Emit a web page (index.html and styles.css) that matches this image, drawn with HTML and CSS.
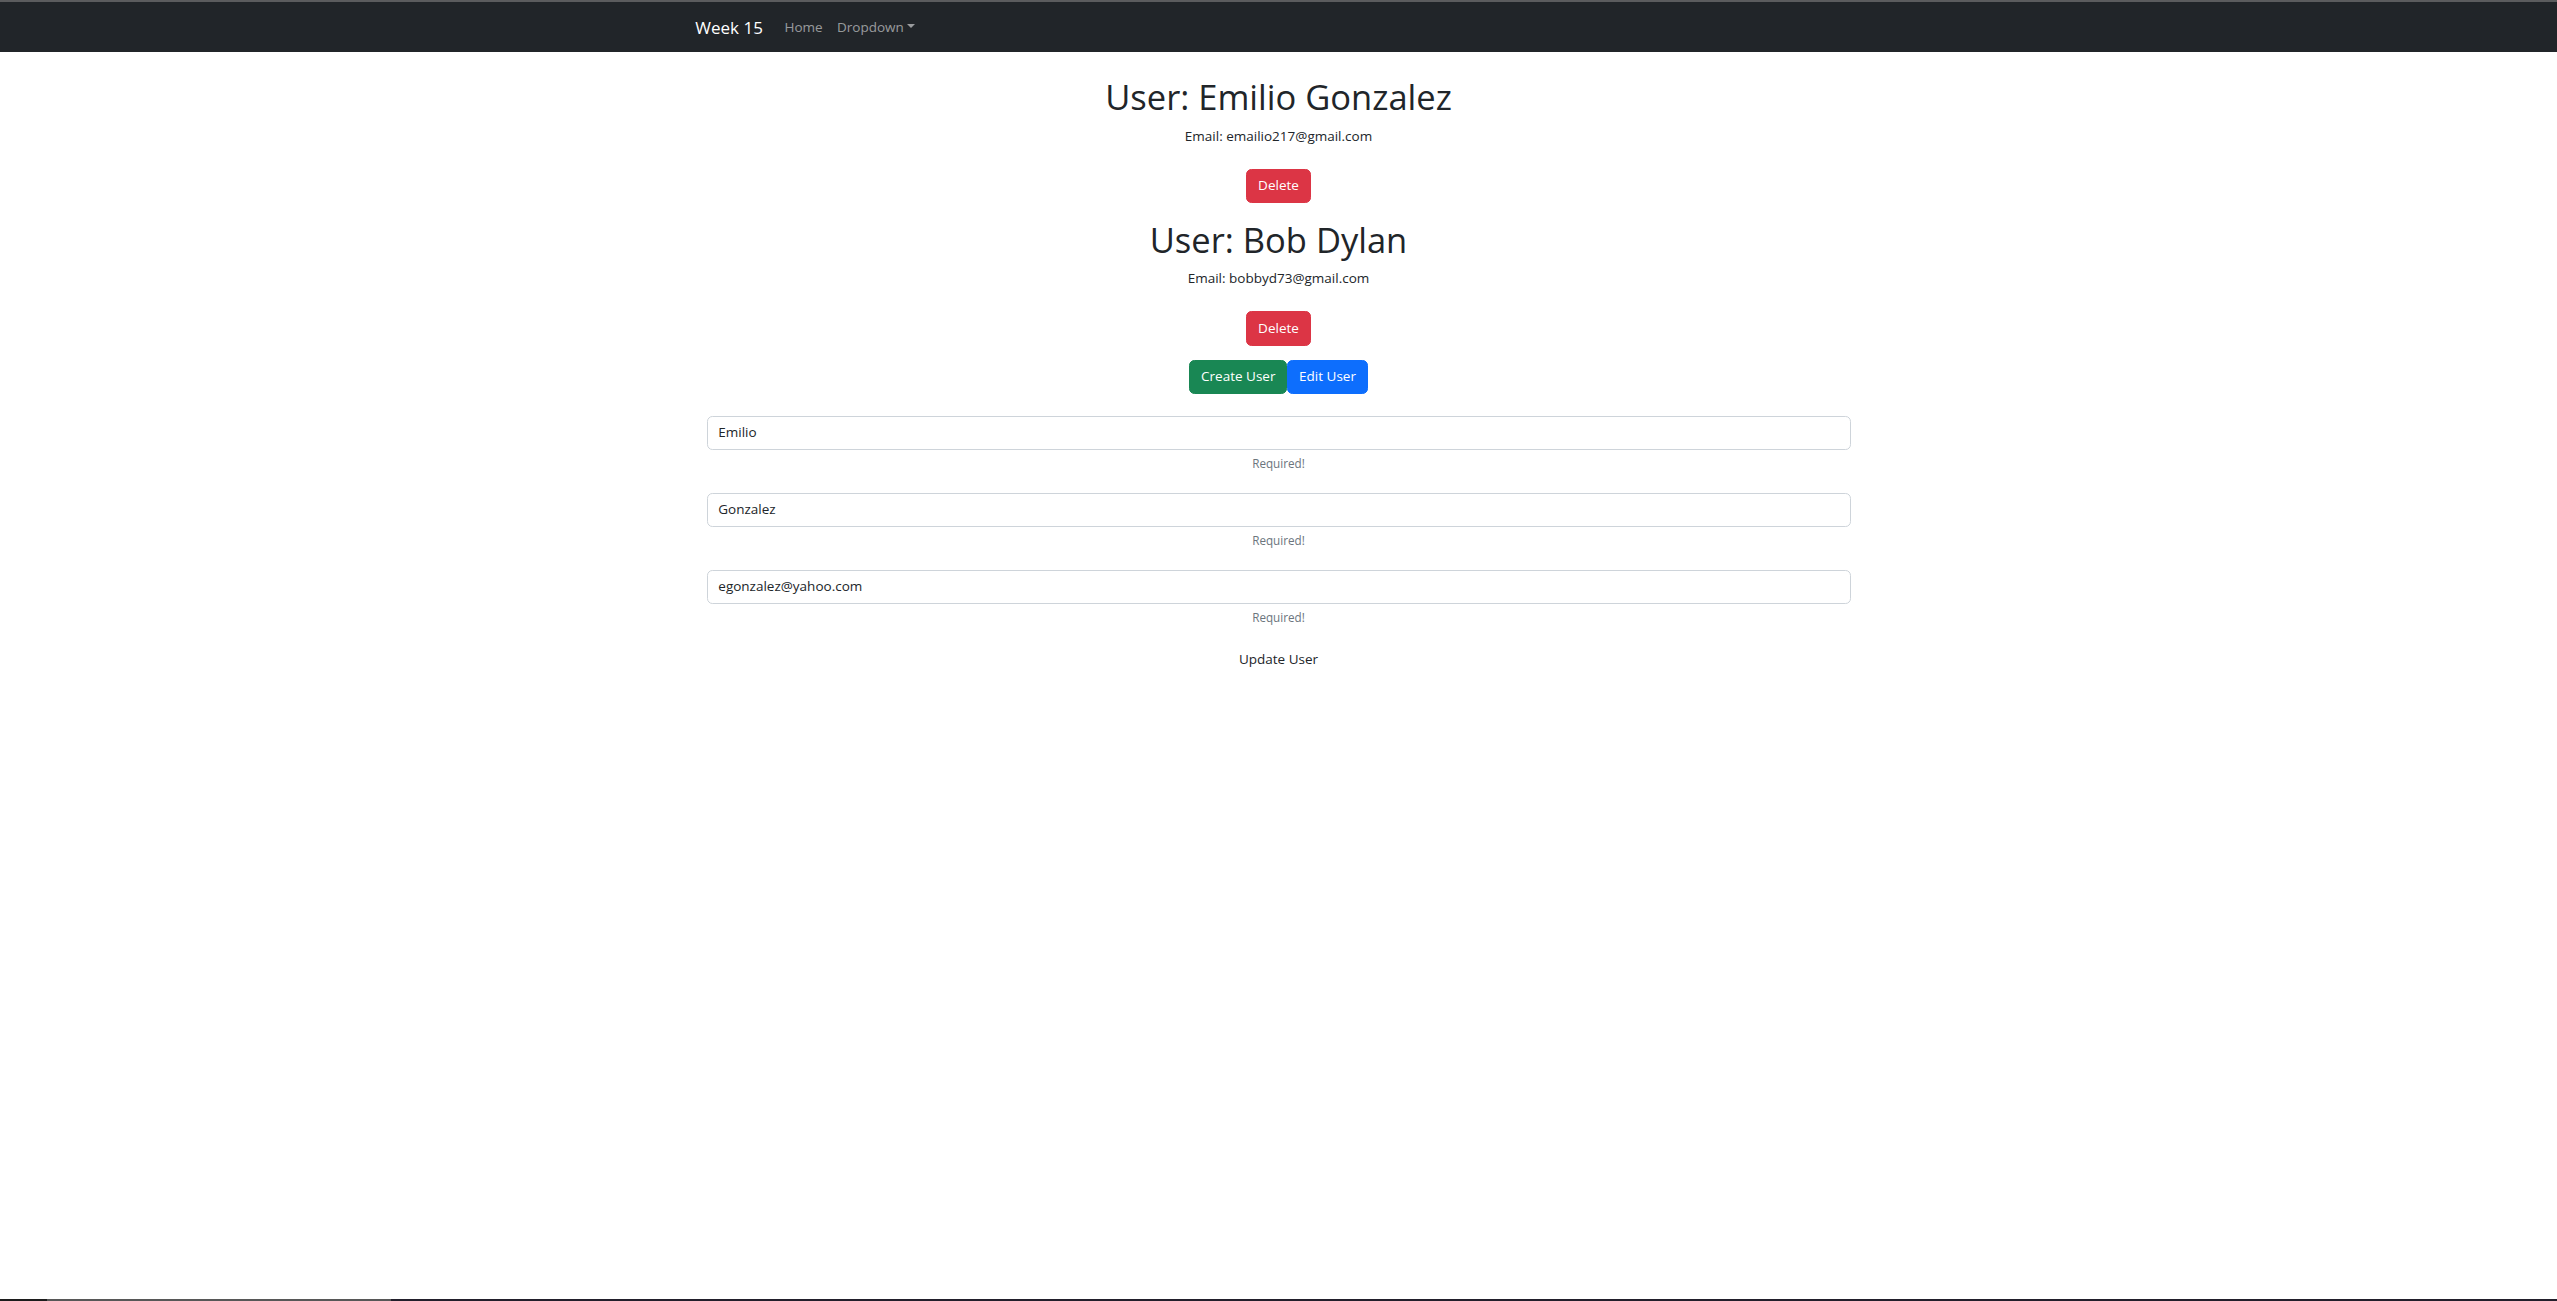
FILE: index.html
```html
<!DOCTYPE html>
<html lang="en">
<head>
<meta charset="utf-8">
<title>Week 15</title>
<link rel="stylesheet" href="styles.css">
</head>
<body>
<div class="chrome-top"></div>
<nav class="navbar">
  <div class="nav-inner">
    <a class="brand" href="#">Week 15</a>
    <ul class="nav-links">
      <li><a class="nav-link" href="#">Home</a></li>
      <li><a class="nav-link" href="#">Dropdown<span class="caret"></span></a></li>
    </ul>
  </div>
</nav>
<main class="page">
  <section class="user">
    <h1 class="user-name">User: Emilio Gonzalez</h1>
    <p class="user-email">Email: emailio217@gmail.com</p>
    <div class="actions"><button class="btn btn-danger" type="button">Delete</button></div>
  </section>
  <section class="user">
    <h1 class="user-name">User: Bob Dylan</h1>
    <p class="user-email">Email: bobbyd73@gmail.com</p>
    <div class="actions"><button class="btn btn-danger" type="button">Delete</button></div>
  </section>
  <div class="toggle">
    <button class="btn btn-success" type="button">Create User</button><button class="btn btn-primary" type="button">Edit User</button>
  </div>
  <form class="user-form">
    <div class="fields">
      <div class="field">
        <input class="form-control" type="text" value="Emilio">
        <small class="form-text">Required!</small>
      </div>
      <div class="field">
        <input class="form-control" type="text" value="Gonzalez">
        <small class="form-text">Required!</small>
      </div>
      <div class="field">
        <input class="form-control" type="text" value="egonzalez@yahoo.com">
        <small class="form-text">Required!</small>
      </div>
    </div>
    <button class="btn btn-plain" type="button">Update User</button>
  </form>
</main>
<div class="taskbar"><span class="tb-a"></span><span class="tb-b"></span><span class="tb-c"></span></div>
</body>
</html>
```

FILE: styles.css
```css
* { box-sizing: border-box; }

html, body { height: 100%; }

body {
  margin: 0;
  font-family: "Open Sans", "Liberation Sans", sans-serif;
  font-size: 13.5px;
  line-height: 21.6px;
  color: #212529;
  background: #fff;
  display: flex;
  flex-direction: column;
  min-height: 100vh;
}

.chrome-top {
  height: 2px;
  background: #5b5c5e;
  flex: none;
}

.navbar {
  background: #212529;
  padding: 7.5px 0 6.5px;
  flex: none;
}

.nav-inner {
  width: 1188px;
  margin: 0 auto;
  padding: 0 10.8px;
  display: flex;
  align-items: center;
}

.brand {
  color: #fff;
  text-decoration: none;
  font-size: 17px;
  line-height: 27px;
  padding: 4.5px 0;
  margin-right: 14.4px;
}

.nav-links {
  list-style: none;
  margin: 0;
  padding: 0;
  display: flex;
}

.nav-link {
  display: block;
  color: rgba(255, 255, 255, 0.55);
  text-decoration: none;
  padding: 7.2px 7.2px;
  font-size: 13.5px;
  line-height: 21.6px;
}

.caret {
  display: inline-block;
  margin-left: 3.4px;
  vertical-align: 3.4px;
  border-top: 4px solid;
  border-right: 4px solid transparent;
  border-left: 4px solid transparent;
}

.page {
  flex: 1 0 auto;
  text-align: center;
  padding-top: 23.4px;
}

.user {
  padding-bottom: 14.4px;
}

.user-name {
  margin: 0 0 7.2px;
  font-size: 34.5px;
  line-height: 43.2px;
  font-weight: 500;
  color: #212529;
}

.user-email {
  margin: 0;
}

.actions {
  margin-top: 21.6px;
}

.btn {
  display: inline-block;
  font-family: inherit;
  font-size: 13.5px;
  line-height: 21.6px;
  padding: 5.4px 10.8px;
  border: 1px solid transparent;
  border-radius: 5.4px;
  color: #fff;
  background: transparent;
  cursor: pointer;
}

.btn-danger { background: #dc3545; border-color: #dc3545; }
.btn-success { background: #198754; border-color: #198754; }
.btn-primary { background: #0d6efd; border-color: #0d6efd; }
.btn-plain { color: #212529; }

.toggle {
  display: flex;
  justify-content: center;
}

.user-form {
  width: 1144px;
  margin: 21.6px auto 0;
}

.fields {
  display: grid;
  row-gap: 20.1px;
}

.form-control {
  display: block;
  width: 100%;
  font-family: inherit;
  font-size: 13.5px;
  line-height: 21.6px;
  padding: 5.4px 10.8px;
  color: #212529;
  background: #fff;
  border: 1px solid #ced4da;
  border-radius: 5.4px;
}

.form-text {
  display: block;
  margin-top: 3.6px;
  font-size: 11.7px;
  line-height: 18.9px;
  color: #6c757d;
}

.btn-plain {
  margin-top: 15.7px;
}

.taskbar {
  flex: none;
  height: 2px;
  display: flex;
}

.tb-a { width: 47px; background: #1c1c1c; }
.tb-b { width: 344px; background: #575757; }
.tb-c { flex: 1; background: #221f2b; }
```
